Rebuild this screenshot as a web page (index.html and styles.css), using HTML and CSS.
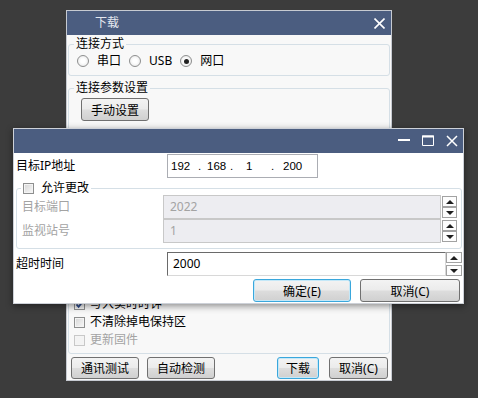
FILE: index.html
```html
<!DOCTYPE html>
<html lang="zh-CN">
<head>
    <meta charset="UTF-8">
    <title>下载</title>
    <link rel="stylesheet" href="styles.css">
</head>
<body>
    <div class="desk">

        <!-- main download window -->
        <div class="win win-main">
            <div class="titlebar main-title">
                <span class="title">下载</span>
                <svg class="tb-icon" width="11" height="11" viewBox="0 0 11 11">
                    <path d="M0.5 0.5 L10.5 10.5 M10.5 0.5 L0.5 10.5" stroke="#fff" stroke-width="1.6" fill="none"/>
                </svg>
            </div>
            <div class="main-body">
                <fieldset class="group group-conn">
                    <legend>连接方式</legend>
                    <div class="radio-row">
                        <label class="radio"><span class="dot"></span>串口</label>
                        <label class="radio"><span class="dot"></span>USB</label>
                        <label class="radio"><span class="dot on"></span>网口</label>
                    </div>
                </fieldset>

                <fieldset class="group group-params">
                    <legend>连接参数设置</legend>
                    <div class="manual-row">
                        <button class="btn btn-manual">手动设置</button>
                    </div>
                    <div class="opts">
                        <div class="check"><span class="box checked">
                            <svg width="9" height="9" viewBox="0 0 9 9"><path d="M1.5 4.5 L3.6 6.8 L7.6 1.8" stroke="#2c4a8a" stroke-width="1.8" fill="none"/></svg>
                        </span>写入实时时钟</div>
                        <div class="check"><span class="box"></span>不清除掉电保持区</div>
                        <div class="check disabled"><span class="box"></span>更新固件</div>
                    </div>
                </fieldset>

                <div class="main-buttons">
                    <button class="btn w68">通讯测试</button>
                    <button class="btn w68">自动检测</button>
                    <span class="spacer"></span>
                    <button class="btn btn-default btn-down">下载</button>
                    <button class="btn btn-cancel-main">取消(C)</button>
                </div>
            </div>
        </div>

        <!-- network settings dialog -->
        <div class="win win-dialog">
            <div class="titlebar dlg-title">
                <svg class="tb-icon" width="12" height="12" viewBox="0 0 12 12">
                    <rect x="0" y="4" width="12" height="2" fill="#fff"/>
                </svg>
                <svg class="tb-icon" width="12" height="12" viewBox="0 0 12 12">
                    <path d="M0.5 1 H11.5 V10.5 H0.5 Z" stroke="#fff" stroke-width="1" fill="none"/>
                    <rect x="0" y="0.5" width="12" height="2" fill="#fff"/>
                </svg>
                <svg class="tb-icon" width="12" height="12" viewBox="0 0 12 12">
                    <path d="M1 1 L11 11 M11 1 L1 11" stroke="#fff" stroke-width="1.5" fill="none"/>
                </svg>
            </div>
            <div class="dlg-body">
                <div class="row row-ip">
                    <span class="lbl">目标IP地址</span>
                    <div class="ip-box">
                        <span>192</span><span>.</span><span>168</span><span>.</span><span>1</span><span>.</span><span>200</span>
                    </div>
                </div>

                <fieldset class="group group-allow">
                    <legend><span class="check"><span class="box"></span>允许更改</span></legend>
                    <div class="field-row first">
                        <span class="lbl-in">目标端口</span>
                        <div class="spin">
                            <div class="spin-field disabled">2022</div>
                            <div class="spin-btns">
                                <span class="sb"><i class="up"></i></span>
                                <span class="sb"><i class="down"></i></span>
                            </div>
                        </div>
                    </div>
                    <div class="field-row">
                        <span class="lbl-in">监视站号</span>
                        <div class="spin">
                            <div class="spin-field disabled">1</div>
                            <div class="spin-btns">
                                <span class="sb"><i class="up"></i></span>
                                <span class="sb"><i class="down"></i></span>
                            </div>
                        </div>
                    </div>
                </fieldset>

                <div class="row row-timeout">
                    <span class="lbl">超时时间</span>
                    <div class="spin spin-timeout">
                        <div class="spin-field sunken">2000</div>
                        <div class="spin-btns">
                            <span class="sb"><i class="up"></i></span>
                            <span class="sb"><i class="down"></i></span>
                        </div>
                    </div>
                </div>

                <div class="dlg-buttons">
                    <button class="btn btn-default btn-ok">确定(E)</button>
                    <button class="btn btn-cancel">取消(C)</button>
                </div>
            </div>
        </div>

    </div>
</body>
</html>
```

FILE: styles.css
```css
body {
    margin: 0;
    padding: 0;
    background-color: #3c3c3c;
    font-family: "Noto Sans", "Noto Sans CJK SC", sans-serif;
    font-size: 12px;
    line-height: 16px;
    color: #000;
}

.desk {
    position: relative;
    width: 478px;
    height: 398px;
    overflow: hidden;
}

/* windows sit on the desktop at their own place */
.win {
    position: absolute;
    box-sizing: border-box;
    display: flex;
    flex-direction: column;
    overflow: hidden;
}

.titlebar {
    flex: none;
    height: 24px;
    display: flex;
    align-items: center;
    background-color: #4b5d80;
    color: #e4e8ef;
}

.tb-icon {
    display: block;
}

/* ---------- main window ---------- */

.win-main {
    left: 66px;
    top: 10px;
    width: 326px;
    height: 371px;
    border: 1px solid #c6cad1;
    background-color: #f8f8f8;
}

.main-title {
    justify-content: space-between;
    padding: 0 6px 0 28px;
}

.main-body {
    display: flex;
    flex-direction: column;
}

.group {
    margin: 0;
    padding: 0;
    min-width: 0;
    border: 1px solid #d5dfe6;
    border-radius: 3px;
}

.group legend {
    padding: 0 2px;
    margin-left: 5px;
    line-height: 16px;
}

.group-conn {
    margin: 1px 1px 0;
}

.radio-row {
    display: flex;
    align-items: center;
    height: 16px;
    margin: 1px 0 6px 8px;
}

.radio {
    display: flex;
    align-items: center;
    gap: 8px;
    margin-right: 8px;
}

.dot {
    box-sizing: border-box;
    width: 12px;
    height: 12px;
    border: 1px solid #8e8f8f;
    border-radius: 50%;
    background: radial-gradient(circle, #ffffff 30%, #e2e2e2 100%);
    display: flex;
    align-items: center;
    justify-content: center;
}

.dot.on::after {
    content: "";
    width: 5px;
    height: 5px;
    border-radius: 50%;
    background-color: #222;
}

.group-params {
    margin: 4px 1px 0;
}

.manual-row {
    margin-top: 2px;
    padding-left: 12px;
}

.opts {
    margin-top: 174px;
    padding: 0 0 4px 5px;
}

.check {
    display: flex;
    align-items: center;
    gap: 5px;
    height: 18px;
}

.box {
    box-sizing: border-box;
    width: 11px;
    height: 11px;
    border: 1px solid #8e8f8f;
    background: linear-gradient(135deg, #d6d6d6, #f8f8f8);
    box-shadow: inset 0 0 0 1px #f4f4f4;
    display: flex;
    align-items: center;
    justify-content: center;
}

.check.disabled {
    color: #a3a3a3;
}

.check.disabled .box {
    border-color: #c8c8c8;
    background: #f3f3f3;
}

.main-buttons {
    display: flex;
    gap: 8px;
    margin-top: 3px;
    padding: 0 3px 0 4px;
}

.spacer {
    flex: 1;
}

/* ---------- buttons ---------- */

.btn {
    box-sizing: border-box;
    height: 22px;
    padding: 0;
    border: 1px solid #707070;
    border-radius: 3px;
    background: linear-gradient(#f3f3f3 0%, #ebebeb 48%, #dddddd 52%, #d0d0d0 100%);
    font-family: inherit;
    font-size: 12px;
    color: #000;
}

.btn-manual {
    width: 68px;
    height: 23px;
}

.w68 {
    width: 68px;
}

.btn-down {
    width: 42px;
    margin-right: 2px;
}

.btn-cancel-main {
    width: 59px;
}

.btn-default {
    border-color: #3aa7dc;
    box-shadow: inset 0 0 0 1px #c4e8f8;
}

/* ---------- dialog ---------- */

.win-dialog {
    left: 13px;
    top: 128px;
    width: 451px;
    height: 176px;
    border: 1px solid #cdd1d8;
    background-color: #fff;
    box-shadow: 0 2px 7px rgba(0, 0, 0, 0.45);
}

.dlg-title {
    justify-content: flex-end;
    gap: 12px;
    padding-right: 5px;
}

.dlg-body {
    display: flex;
    flex-direction: column;
}

.row {
    display: flex;
    align-items: center;
    padding-left: 2px;
}

.lbl {
    width: 151px;
    flex: none;
}

.row-ip {
    height: 26px;
}

.ip-box {
    box-sizing: border-box;
    width: 151px;
    height: 24px;
    border: 1px solid #abadb3;
    display: grid;
    grid-template-columns: 27px 9px 23px 16px 25px 12px auto;
    align-items: center;
    padding-left: 3px;
    font-family: "Liberation Sans", "Noto Sans", sans-serif;
    font-size: 11.5px;
}

.group-allow {
    margin: 1px 1px 0 2px;
    padding-bottom: 5px;
}

.group-allow legend {
    margin-left: 4px;
}

.group-allow legend .check {
    gap: 7px;
    height: 16px;
}

.field-row {
    display: flex;
    align-items: center;
    height: 24px;
}

.field-row.first {
    margin-top: -1px;
}

.lbl-in {
    box-sizing: border-box;
    width: 146px;
    padding-left: 5px;
    color: #a3a3a3;
}

.spin {
    display: flex;
    width: 294px;
    height: 24px;
}

.spin-field {
    flex: 1;
    box-sizing: border-box;
    padding-left: 6px;
    line-height: 22px;
}

.spin-field.disabled {
    border: 1px solid #c8c8c8;
    background-color: #ededf1;
    color: #a3a3a3;
}

.spin-field.sunken {
    border-top: 1px solid #6a6a6a;
    border-left: 1px solid #6a6a6a;
    border-bottom: 1px solid #d8d8d8;
    border-right: 1px solid #d8d8d8;
    padding-left: 5px;
}

.spin-btns {
    width: 16px;
    flex: none;
    display: flex;
    flex-direction: column;
    justify-content: space-between;
    padding: 1px 0 1px 1px;
    box-sizing: border-box;
}

.sb {
    box-sizing: border-box;
    height: 11px;
    border: 1px solid #a2a2a2;
    background-color: #fdfdfd;
    display: flex;
    align-items: center;
    justify-content: center;
}

.sb i {
    width: 0;
    height: 0;
    border-left: 4px solid transparent;
    border-right: 4px solid transparent;
}

.sb .up {
    border-bottom: 4px solid #1e1e1e;
}

.sb .down {
    border-top: 4px solid #1e1e1e;
}

.row-timeout {
    padding-top: 3px;
}

.spin-timeout {
    width: 295px;
}

.spin-timeout .spin-btns {
    padding: 0;
}

.dlg-buttons {
    display: flex;
    justify-content: flex-end;
    gap: 9px;
    margin-top: 3px;
    padding-right: 3px;
}

.btn-ok {
    width: 98px;
    height: 23px;
}

.btn-cancel {
    width: 100px;
    height: 23px;
}
```
